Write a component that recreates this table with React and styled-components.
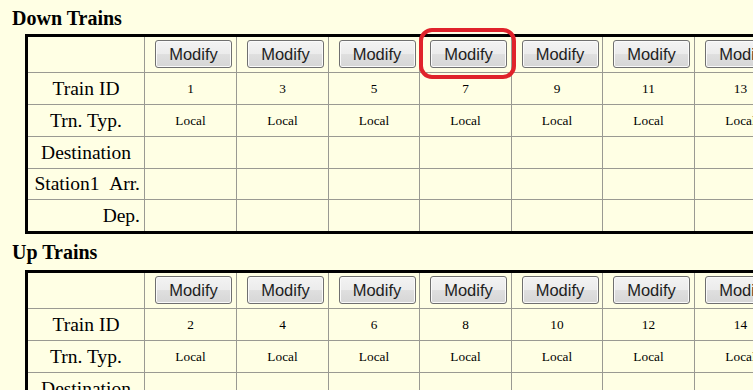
import React from "react";
import styled, { createGlobalStyle } from "styled-components";

const GlobalStyle = createGlobalStyle`
  html, body {
    margin: 0;
    padding: 0;
    background: #ffffe4;
    overflow: hidden;
  }
  body {
    font-family: "Liberation Serif", "Times New Roman", serif;
    color: #000;
  }
`;

const COL_WIDTHS = [92, 92, 91, 92, 91, 92, 92, 92];
const ROW_HEIGHTS = [36, 32, 32, 32, 31, 31];

const Page = styled.div`
  padding-left: 12px;
  white-space: nowrap;
  width: max-content;
`;

const Heading = styled.h3`
  margin: 0;
  padding-top: 8px;
  height: ${(p) => p.$height}px;
  box-sizing: border-box;
  font-size: 20px;
  line-height: 21px;
  font-weight: bold;
`;

const Grid = styled.div`
  margin-left: 13px;
  display: grid;
  width: max-content;
  grid-template-columns: 117px ${COL_WIDTHS.map((w) => `${w}px`).join(" ")};
  grid-template-rows: ${ROW_HEIGHTS.map((h) => `${h}px`).join(" ")};
  border: 3px solid #000;
`;

const Cell = styled.div`
  position: relative;
  box-sizing: border-box;
  border-right: 1px solid #9a9a92;
  border-bottom: ${(p) => (p.$last ? "none" : "1px solid #9a9a92")};
  display: flex;
  align-items: center;
  justify-content: ${(p) =>
    p.$align === "right" ? "flex-end" : "center"};
  padding: ${(p) => (p.$align === "right" ? "0 4px 0 0" : "0")};
`;

const LabelText = styled.span`
  font-size: 19.5px;
  white-space: pre;
`;

const ValueText = styled.span`
  font-size: 13.3px;
`;

const ButtonCell = styled(Cell)`
  padding-left: 6px;
`;

const ModifyButton = styled.button`
  box-sizing: border-box;
  width: 77px;
  height: 28px;
  margin-top: -1px;
  padding: 0;
  border: 1px solid #707070;
  border-radius: 3px;
  background: linear-gradient(#f3f3f3 0%, #ececec 48%, #dfdfdf 52%, #d6d6d6 100%);
  box-shadow: inset 0 0 0 1px #fafafa;
  font-family: "Liberation Sans", Arial, sans-serif;
  font-size: 16.5px;
  color: #1e1e1e;
  cursor: pointer;
`;

const Highlight = styled.span`
  position: absolute;
  left: -1px;
  right: -5px;
  top: -9px;
  bottom: -7px;
  border: 4px solid #e0232b;
  border-radius: 13px;
  pointer-events: none;
  z-index: 2;
`;

const LABELS = [
  { text: "Train ID", key: "id" },
  { text: "Trn. Typ.", key: "type" },
  { text: "Destination", key: "dest" },
  { text: "Station1\u00a0\u00a0Arr.", key: "arr", align: "right" },
  { text: "Dep.", key: "dep", align: "right" },
];

function TrainTable({ trains, highlightIndex }) {
  const lastRow = LABELS.length - 1;
  return (
    <Grid>
      <Cell />
      {trains.map((t, i) => (
        <ButtonCell key={`b${t.id}`}>
          <ModifyButton type="button">Modify</ModifyButton>
          {i === highlightIndex && <Highlight />}
        </ButtonCell>
      ))}
      {LABELS.map((row, r) => (
        <React.Fragment key={row.key}>
          <Cell $align={row.align} $last={r === lastRow}>
            <LabelText>{row.text}</LabelText>
          </Cell>
          {trains.map((t) => (
            <Cell key={`${row.key}${t.id}`} $last={r === lastRow}>
              {row.key === "id" && <ValueText>{t.id}</ValueText>}
              {row.key === "type" && <ValueText>{t.type}</ValueText>}
            </Cell>
          ))}
        </React.Fragment>
      ))}
    </Grid>
  );
}

const makeTrains = (start) =>
  COL_WIDTHS.map((_, i) => ({ id: start + i * 2, type: "Local" }));

export default function App() {
  return (
    <>
      <GlobalStyle />
      <Page>
        <Heading $height={34}>Down Trains</Heading>
        <TrainTable trains={makeTrains(1)} highlightIndex={3} />
        <Heading $height={36}>Up Trains</Heading>
        <TrainTable trains={makeTrains(2)} highlightIndex={-1} />
      </Page>
    </>
  );
}
